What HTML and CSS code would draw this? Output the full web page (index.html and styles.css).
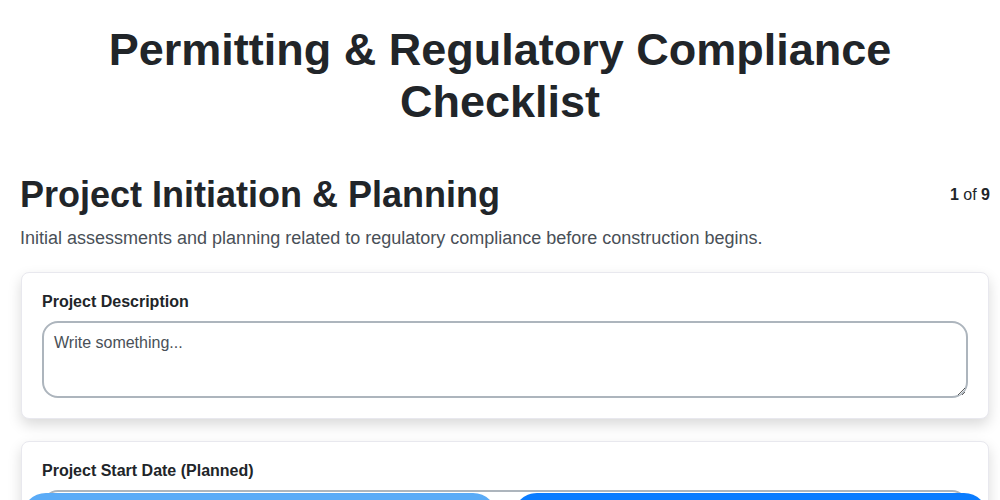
FILE: index.html
```html
<!DOCTYPE html>
<html lang="en">
<head>
<meta charset="utf-8">
<title>Permitting &amp; Regulatory Compliance Checklist</title>
<link rel="stylesheet" href="styles.css">
</head>
<body>
<h1 class="title">Permitting &amp; Regulatory Compliance Checklist</h1>
<div class="page">
  <div class="section-head">
    <h2 class="section-title">Project Initiation &amp; Planning</h2>
    <div class="counter"><b>1</b> of <b>9</b></div>
  </div>
  <p class="section-desc">Initial assessments and planning related to regulatory compliance before construction begins.</p>
  <div class="card">
    <label class="field-label">Project Description</label>
    <textarea class="textarea" placeholder="Write something..."></textarea>
  </div>
  <div class="card">
    <label class="field-label">Project Start Date (Planned)</label>
    <input class="input" type="text">
  </div>
  <div class="card">
    <label class="field-label">Project End Date (Planned)</label>
    <input class="input" type="text">
  </div>
</div>
<div class="footer">
  <button class="btn btn-prev" disabled>Previous</button>
  <button class="btn btn-next">Next</button>
</div>
</body>
</html>
```

FILE: styles.css
```css
* { box-sizing: border-box; }
html, body { margin: 0; padding: 0; background: #fff; }
body {
  font-family: "Liberation Sans", Arial, sans-serif;
  font-size: 16px;
  color: #212529;
}
.title {
  margin: 24px auto 0;
  max-width: 820px;
  text-align: center;
  font-size: 45px;
  line-height: 52px;
  font-weight: 700;
  color: #212529;
}
.page {
  width: 970px;
  margin-left: 20px;
  padding-bottom: 100px;
}
.section-head {
  display: flex;
  justify-content: space-between;
  align-items: center;
  margin-top: 45px;
}
.section-title {
  margin: 0;
  font-size: 36px;
  line-height: 44px;
  font-weight: 700;
}
.counter {
  font-size: 16px;
  color: #212529;
}
.section-desc {
  margin: 10px 0 23px;
  font-size: 18px;
  line-height: 22px;
  color: #495057;
}
.card {
  display: flex;
  flex-direction: column;
  width: 968px;
  margin-left: 1px;
  padding: 19px 20px 20px;
  margin-bottom: 22px;
  background: #fff;
  border: 1px solid #e8e8ee;
  border-radius: 8px;
  box-shadow: 0 6px 14px rgba(0, 0, 0, 0.15);
}
.field-label {
  font-size: 16px;
  line-height: 19px;
  font-weight: 700;
  margin-bottom: 10px;
  color: #212529;
}
.textarea {
  height: 77px;
  padding: 10px;
  border: 2px solid #adb5bd;
  border-radius: 16px;
  font-family: "Liberation Sans", Arial, sans-serif;
  font-size: 16px;
  line-height: 19px;
  color: #495057;
  resize: vertical;
}
.textarea::placeholder { color: #495057; }
.input {
  height: 44px;
  padding: 10px;
  border: 2px solid #adb5bd;
  border-radius: 16px;
  font-family: "Liberation Sans", Arial, sans-serif;
  font-size: 16px;
}
.footer {
  position: fixed;
  left: 22px;
  top: 493px;
  width: 966px;
  display: flex;
  gap: 16px;
}
.btn {
  flex: 1;
  height: 48px;
  border: 0;
  border-radius: 24px;
  font-family: "Liberation Sans", Arial, sans-serif;
  font-size: 16px;
  font-weight: 700;
  color: #fff;
}
.btn-prev { background: #5aabf7; }
.btn-next { background: #0a7cff; }
```
